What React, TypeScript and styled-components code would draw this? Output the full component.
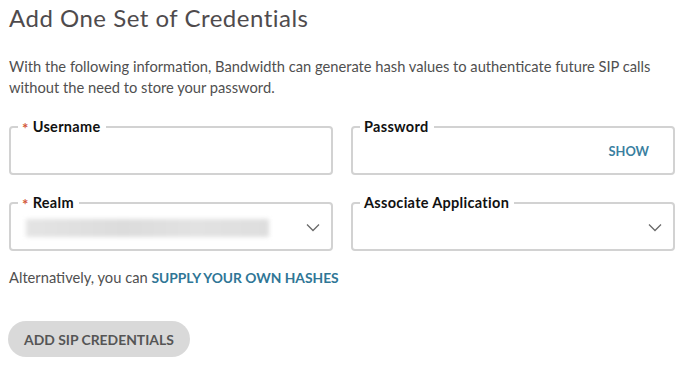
import React from 'react';
import styled, { createGlobalStyle } from 'styled-components';

const GlobalStyle = createGlobalStyle`
  body {
    margin: 0;
    background: #ffffff;
    font-family: Lato, 'Liberation Sans', sans-serif;
  }
`;

const Page = styled.main`
  width: 688px;
  height: 367px;
  padding: 0 13px 0 9px;
  box-sizing: border-box;
  overflow: hidden;
`;

const Title = styled.h1`
  margin: 0;
  padding-top: 3px;
  font-size: 24px;
  font-weight: 400;
  line-height: 30px;
  color: #4f4b4d;
  letter-spacing: 0.5px;
`;

const Intro = styled.p`
  margin: 23px 0 0;
  font-size: 14.7px;
  line-height: 21px;
  color: #505050;
`;

const FieldGrid = styled.div`
  display: grid;
  grid-template-columns: 1fr 1fr;
  column-gap: 18px;
  row-gap: 20px;
  margin-top: 21px;
`;

const Field = styled.fieldset`
  margin: 0;
  padding: 0 14px;
  height: 56px;
  box-sizing: border-box;
  border: 2px solid #d2d2d2;
  border-radius: 4px;
  display: flex;
  align-items: center;
  justify-content: space-between;
`;

const Legend = styled.legend`
  padding: 0 5px 0 4px;
  margin-left: -7px;
  font-size: 14.5px;
  font-weight: 700;
  color: #111111;
  line-height: 16px;
  letter-spacing: 0.3px;
`;

const Required = styled.span`
  display: inline-block;
  color: #d3573b;
  font-size: 15px;
  line-height: 10px;
  margin-right: 4px;
  position: relative;
  top: 2px;
`;

const BlurredValue = styled.div`
  width: 243px;
  height: 18px;
  margin-left: 1px;
  margin-top: -4px;
  background: linear-gradient(90deg, #e4e4e4, #dcdcdc 40%, #e2e2e2 70%, #dedede);
  filter: blur(2px);
`;

const ShowButton = styled.button`
  margin-left: auto;
  margin-right: 10px;
  margin-top: -6px;
  border: none;
  background: none;
  padding: 0;
  font-family: inherit;
  font-size: 12.8px;
  font-weight: 700;
  color: #3a7f9f;
`;

const Chevron = styled.svg`
  margin-left: auto;
  margin-right: -3px;
  margin-top: -6px;
`;

const AltLine = styled.p`
  margin: 16px 0 0;
  font-size: 14.7px;
  line-height: 20px;
  color: #505050;
`;

const AltLink = styled.a`
  color: #2f7696;
  font-weight: 700;
  font-size: 13.8px;
  text-decoration: none;
`;

const SubmitButton = styled.button`
  margin-top: 33px;
  margin-left: -1px;
  height: 36px;
  padding: 0 16px;
  border: none;
  border-radius: 18px;
  background: #d9d9d9;
  font-family: inherit;
  font-size: 13.9px;
  font-weight: 700;
  color: #555555;
`;

function ChevronDown() {
  return (
    <Chevron width="14" height="9" viewBox="0 0 14 9" fill="none">
      <path d="M1 1.5 L7 7.5 L13 1.5" stroke="#6a6a6a" strokeWidth="1.3" />
    </Chevron>
  );
}

export default function App() {
  return (
    <>
      <GlobalStyle />
      <Page>
        <Title>Add One Set of Credentials</Title>
        <Intro>
          With the following information, Bandwidth can generate hash values to authenticate future SIP calls
          without the need to store your password.
        </Intro>
        <FieldGrid>
          <Field>
            <Legend>
              <Required>*</Required>Username
            </Legend>
          </Field>
          <Field>
            <Legend>Password</Legend>
            <ShowButton>SHOW</ShowButton>
          </Field>
          <Field>
            <Legend>
              <Required>*</Required>Realm
            </Legend>
            <BlurredValue />
            <ChevronDown />
          </Field>
          <Field>
            <Legend>Associate Application</Legend>
            <ChevronDown />
          </Field>
        </FieldGrid>
        <AltLine>
          Alternatively, you can <AltLink href="#">SUPPLY YOUR OWN HASHES</AltLink>
        </AltLine>
        <SubmitButton>ADD SIP CREDENTIALS</SubmitButton>
      </Page>
    </>
  );
}
